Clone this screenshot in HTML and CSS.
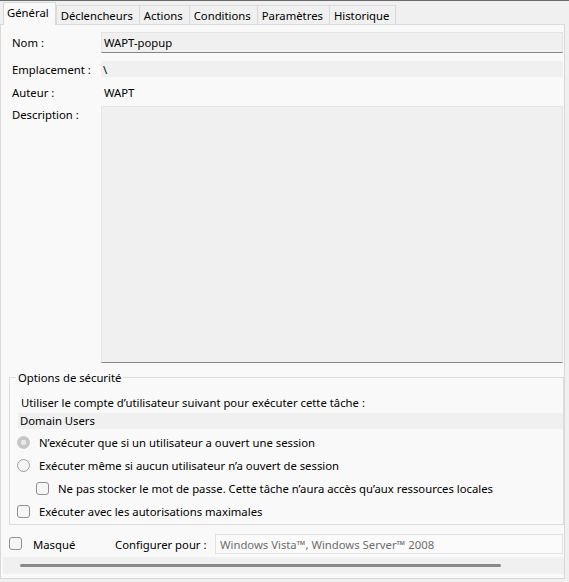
FILE: index.html
```html
<!DOCTYPE html>
<html lang="fr">
<head>
<meta charset="utf-8">
<title>Propriétés de la tâche</title>
<link rel="stylesheet" href="styles.css">
</head>
<body>
<div class="topline"></div>
<div class="tabs">
  <div class="tab sel">Général</div>
  <div class="tab">Déclencheurs</div>
  <div class="tab">Actions</div>
  <div class="tab">Conditions</div>
  <div class="tab">Paramètres</div>
  <div class="tab">Historique</div>
</div>
<div class="panel">
  <div class="form">
    <div class="row r-nom"><span class="lbl">Nom :</span><div class="tb tb-border">WAPT-popup</div></div>
    <div class="row r-emp"><span class="lbl">Emplacement :</span><div class="tb tb-flat">\</div></div>
    <div class="row r-aut"><span class="lbl">Auteur :</span><div class="plain">WAPT</div></div>
    <div class="row r-desc"><span class="lbl lbl-top">Description :</span><div class="tb tb-border tb-desc"></div></div>
  </div>
  <fieldset class="group">
    <legend>Options de sécurité</legend>
    <div class="g-caption">Utiliser le compte d’utilisateur suivant pour exécuter cette tâche :</div>
    <div class="tb tb-flat g-user">Domain Users</div>
    <div class="opt"><span class="radio checked"></span><span>N’exécuter que si un utilisateur a ouvert une session</span></div>
    <div class="opt"><span class="radio"></span><span>Exécuter même si aucun utilisateur n’a ouvert de session</span></div>
    <div class="opt sub"><span class="check"></span><span>Ne pas stocker le mot de passe. Cette tâche n’aura accès qu’aux ressources locales</span></div>
    <div class="opt"><span class="check"></span><span>Exécuter avec les autorisations maximales</span></div>
  </fieldset>
  <div class="bottom">
    <span class="check b-check"></span>
    <span class="b-masque">Masqué</span>
    <span class="b-cfg">Configurer pour :</span>
    <div class="b-box">Windows Vista™, Windows Server™ 2008</div>
  </div>
  <div class="hscroll"><div class="thumb"></div></div>
</div>
</body>
</html>
```
FILE: styles.css
```css
* { box-sizing: border-box; }
html, body { margin: 0; padding: 0; }
body {
  width: 569px;
  height: 582px;
  overflow: hidden;
  background: #f0f0f0;
  font-family: "Noto Sans", "Open Sans", sans-serif;
  font-size: 11.3px;
  line-height: 15px;
  color: #000;
}
.topline { height: 1px; background: #6a6a6a; }

.tabs {
  height: 23px;
  display: flex;
  align-items: flex-end;
  padding-left: 3px;
  position: relative;
  z-index: 2;
}
.tab {
  height: 19px;
  padding: 0 6px 0 4px;
  border: 1px solid #d9d9d9;
  border-bottom: none;
  background: #f0f0f0;
  display: flex;
  align-items: center;
  margin-left: -1px;
  white-space: nowrap;
}
.tab.sel {
  height: 23px;
  margin-left: 0;
  margin-right: 1px;
  margin-bottom: -1px;
  padding: 0 6px 0 3px;
  background: #f9f9f9;
  padding-bottom: 3px;
}

.panel {
  width: 565px;
  height: 555px;
  background: #f9f9f9;
  border: 1px solid #d9d9d9;
  position: relative;
  z-index: 1;
}

.form { padding-top: 7px; }
.row {
  display: grid;
  grid-template-columns: 100px 462px;
  align-items: center;
}
.lbl { padding-left: 11px; white-space: nowrap; }
.r-nom { height: 21px; }
.r-emp { height: 16px; margin-top: 8px; }
.r-aut { height: 17px; margin-top: 7px; }
.r-desc { height: 257px; margin-top: 5px; align-items: stretch; }
.lbl-top { padding-top: 1px; }

.tb { background: #f0f0f0; padding-left: 3px; white-space: nowrap; }
.tb-border {
  height: 100%;
  border: 1px solid #e4e4e4;
  border-bottom: 1px solid #858585;
  padding-left: 2px;
  display: flex;
  align-items: center;
}
.tb-flat { height: 16px; line-height: 15px; padding-left: 2px; }
.r-emp .tb-flat { line-height: 17px; }
.plain { padding-left: 3px; }
.tb-desc { height: 257px; }

.group {
  margin: 7px 0 0 8px;
  padding: 0 0 1px 0;
  width: 555px;
  border: 1px solid #dcdcdc;
  min-width: 0;
}
.group legend {
  padding: 0 2px;
  margin-left: 6px;
  line-height: 15px;
}
.g-caption { padding: 10px 0 0 11px; white-space: nowrap; }
.g-user { margin: 3px 0 0 8px; }
.opt {
  height: 23px;
  display: flex;
  align-items: center;
  gap: 9px;
  padding-left: 7px;
  white-space: nowrap;
}
.g-user + .opt { margin-top: 2px; }
.opt.sub { padding-left: 26px; }

.radio, .check {
  width: 13px;
  height: 13px;
  flex: none;
  display: inline-block;
}
.radio {
  border-radius: 50%;
  border: 1px solid #9e9e9e;
  background: #f4f4f4;
}
.radio.checked {
  border-color: #c6c6c6;
  background: radial-gradient(circle, #e9e9e9 0 2.5px, #c6c6c6 3px);
}
.check {
  border: 1px solid #8f8f8f;
  border-radius: 3px;
  background: #f6f6f6;
}

.bottom {
  margin-top: 9px;
  height: 20px;
  display: flex;
  align-items: center;
  white-space: nowrap;
}
.b-check { margin-left: 8px; margin-top: -1px; }
.b-masque { margin-left: 11px; width: 82px; }
.b-cfg { width: 100px; }
.b-box {
  width: 348px;
  height: 20px;
  border: 1px solid #e3e3e3;
  background: #fbfbfb;
  color: #6e6e6e;
  padding-left: 4px;
  display: flex;
  align-items: center;
}

.hscroll {
  margin: 3px 0 0 2px;
  width: 561px;
  height: 17px;
  background: #f0f0f0;
  padding: 7px 0 0 17px;
}
.thumb {
  width: 481px;
  height: 3px;
  border-radius: 2px;
  background: #8a8a8a;
}
```
